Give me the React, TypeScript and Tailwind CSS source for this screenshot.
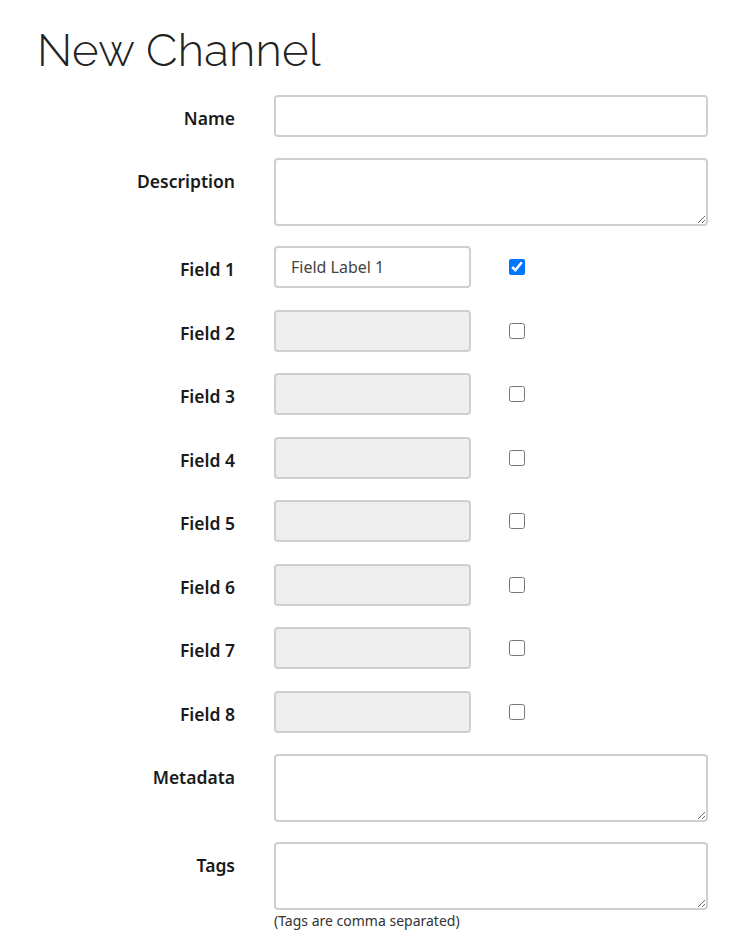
import React from "react";

const labelCls =
  "w-[235px] shrink-0 text-right text-[17.5px] font-semibold text-[#1a1a1a] leading-[24px] pt-[11px]";
const inputBase =
  "block border-2 border-[#cfcfcf] rounded-[4px] outline-none";

export default function App() {
  const fields = [1, 2, 3, 4, 5, 6, 7, 8];
  return (
    <div
      className="w-[750px] min-h-[944px] bg-white"
      style={{ fontFamily: '"Source Sans Pro", "Noto Sans", sans-serif' }}
    >
      <h1
        className="pl-[37px] pt-[24px] text-[45.5px] leading-[52px] font-light text-[#222] tracking-[0.3px]"
        style={{ fontFamily: '"Raleway", Lato, "Open Sans", sans-serif' }}
      >
        New Channel
      </h1>
      <div className="mt-[19px] flex flex-col">
        <div className="flex">
          <label className={labelCls}>Name</label>
          <input className={`${inputBase} ml-[39px] w-[434px] h-[42px] bg-white`} />
        </div>
        <div className="flex mt-[21px]">
          <label className={labelCls}>Description</label>
          <textarea className={`${inputBase} ml-[39px] w-[434px] h-[68px] bg-white`} />
        </div>
        <div className="flex flex-col gap-[21.5px] mt-[20px]">
          {fields.map((n) => (
            <div key={n} className="flex items-start">
              <label className={labelCls}>Field {n}</label>
              <input
                className={`${inputBase} ml-[39px] w-[197px] h-[42px] px-[15px] text-[16px] text-[#444] ${
                  n === 1 ? "bg-white" : "bg-[#eeeeee]"
                }`}
                defaultValue={n === 1 ? "Field Label 1" : ""}
                disabled={n !== 1}
              />
              <input
                type="checkbox"
                defaultChecked={n === 1}
                className="ml-[38px] mt-[13px] w-[16px] h-[16px] accent-[#0075ff]"
              />
            </div>
          ))}
        </div>
        <div className="flex mt-[21px]">
          <label className={labelCls}>Metadata</label>
          <textarea className={`${inputBase} ml-[39px] w-[434px] h-[68px] bg-white`} />
        </div>
        <div className="flex mt-[20px]">
          <label className={labelCls}>Tags</label>
          <div className="ml-[39px]">
            <textarea className={`${inputBase} w-[434px] h-[68px] bg-white`} />
            <div className="text-[14px] leading-[20px] text-[#333] mt-[1px]">
              (Tags are comma separated)
            </div>
          </div>
        </div>
      </div>
    </div>
  );
}
